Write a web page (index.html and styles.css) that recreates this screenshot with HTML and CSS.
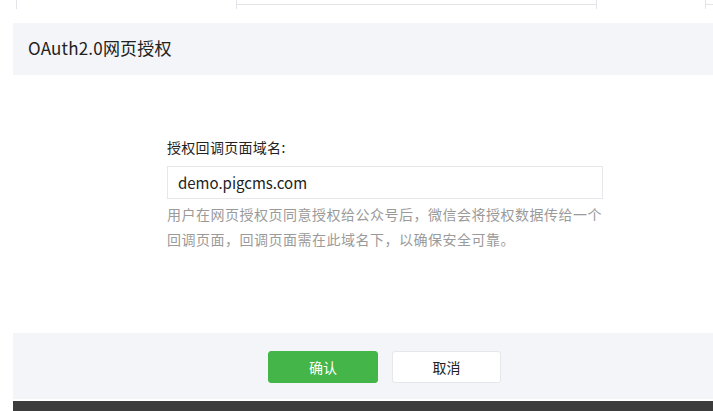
FILE: index.html
```html
<!DOCTYPE html>
<html lang="zh-CN">
<head>
<meta charset="utf-8">
<link rel="stylesheet" href="styles.css">
</head>
<body>
<div class="top">
  <div class="cell c1"></div>
  <div class="cell c2"><div class="hline"></div></div>
  <div class="cell c3"></div>
  <div class="cell c4"><div class="hline"></div></div>
</div>
<div class="panel">
  <div class="panel-hd">OAuth2.0网页授权</div>
  <div class="panel-bd">
    <div class="form">
      <label class="label">授权回调页面域名:</label>
      <div class="input">demo.pigcms.com</div>
      <p class="tips">用户在网页授权页同意授权给公众号后，微信会将授权数据传给一个<br>回调页面，回调页面需在此域名下，以确保安全可靠。</p>
    </div>
  </div>
  <div class="panel-ft">
    <button class="btn btn-primary">确认</button>
    <button class="btn btn-default">取消</button>
  </div>
</div>
<div class="bottom"></div>
</body>
</html>
```
FILE: styles.css
```css
html, body {
  margin: 0;
  padding: 0;
  background: #fff;
  font-family: "Noto Sans CJK SC", "Open Sans", sans-serif;
  color: #353535;
  overflow: hidden;
}
.top {
  display: flex;
  height: 23px;
  padding-left: 16px;
}
.cell {
  height: 9px;
  border-left: 1px solid #e4e4e8;
  box-sizing: border-box;
}
.c1 { width: 220px; }
.c2 { width: 360px; }
.c3 { width: 109px; }
.c4 { flex: 1; }
.hline {
  margin-top: 4px;
  border-top: 1px solid #e4e4e8;
}
.panel {
  margin-left: 13px;
}
.panel-hd {
  background: #f4f5f9;
  height: 52px;
  line-height: 50px;
  padding-left: 15px;
  font-size: 17px;
  color: #222;
  letter-spacing: 0.2px;
}
.panel-bd {
  height: 258px;
  box-sizing: border-box;
  padding: 60px 0 0 154px;
}
.form {
  width: 440px;
}
.label {
  display: block;
  font-size: 14px;
  line-height: 24px;
  height: 31px;
  color: #222;
  letter-spacing: 0.3px;
}
.input {
  width: 436px;
  height: 33px;
  box-sizing: border-box;
  border: 1px solid #e7e7eb;
  padding: 0 10px;
  line-height: 31px;
  font-size: 15px;
  color: #222;
}
.tips {
  margin: 3px 0 0;
  font-size: 14px;
  line-height: 25px;
  color: #9a9a9a;
  white-space: nowrap;
  letter-spacing: 0.5px;
}
.panel-ft {
  background: #f4f5f9;
  height: 66px;
  box-sizing: border-box;
  padding: 18px 0 0 255px;
  display: flex;
  gap: 14px;
  align-items: flex-start;
}
.btn {
  height: 32px;
  width: 110px;
  border-radius: 3px;
  font-family: inherit;
  font-size: 14px;
  padding: 0;
  cursor: pointer;
}
.btn-primary {
  background: #44b549;
  border: 1px solid #44b549;
  color: #fff;
}
.btn-default {
  background: #fff;
  border: 1px solid #e4e8eb;
  color: #222;
  width: 109px;
}
.bottom {
  margin-left: 13px;
  margin-top: 2px;
  height: 12px;
  background: #3c3c3c;
}
```
